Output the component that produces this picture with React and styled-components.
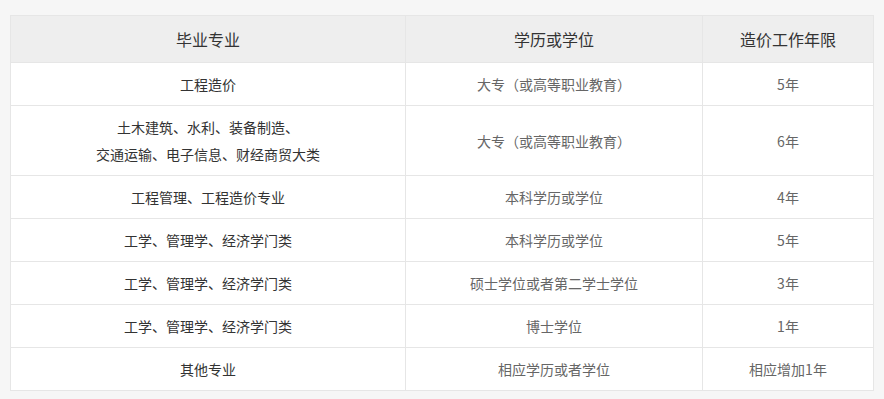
import styled, { createGlobalStyle } from 'styled-components'

const GlobalStyle = createGlobalStyle`
    html, body {
        margin: 0;
        padding: 0;
        background: #f6f6f6;
        font-family: "Noto Sans CJK SC", "Noto Sans", sans-serif;
    }
`

const Page = styled.div`
    padding: 15px 11px 8px 10px;
`

const Table = styled.table`
    width: 863px;
    border-collapse: collapse;
    table-layout: fixed;
    background: #fff;
    border: 1px solid #e6e6e6;
`

const HeadCell = styled.th`
    height: 46px;
    padding: 0 15px;
    background: #eeeeee;
    border: 1px solid #e6e6e6;
    font-size: 16px;
    font-weight: normal;
    color: #333;
    text-align: center;
`

const Cell = styled.td`
    padding: 8px 15px 7px;
    border: 1px solid #e6e6e6;
    font-size: 14px;
    line-height: 27px;
    color: ${props => props.$dark ? '#333' : '#666'};
    text-align: center;
`

const rows = [
    { major: ['工程造价'], degree: '大专（或高等职业教育）', years: '5年' },
    { major: ['土木建筑、水利、装备制造、', '交通运输、电子信息、财经商贸大类'], degree: '大专（或高等职业教育）', years: '6年' },
    { major: ['工程管理、工程造价专业'], degree: '本科学历或学位', years: '4年' },
    { major: ['工学、管理学、经济学门类'], degree: '本科学历或学位', years: '5年' },
    { major: ['工学、管理学、经济学门类'], degree: '硕士学位或者第二学士学位', years: '3年' },
    { major: ['工学、管理学、经济学门类'], degree: '博士学位', years: '1年' },
    { major: ['其他专业'], degree: '相应学历或者学位', years: '相应增加1年' },
]

export default function App() {
    return (
        <>
            <GlobalStyle />
            <Page>
                <Table>
                    <colgroup>
                        <col style={{ width: 395 }} />
                        <col style={{ width: 297 }} />
                        <col style={{ width: 171 }} />
                    </colgroup>
                    <thead>
                        <tr>
                            <HeadCell>毕业专业</HeadCell>
                            <HeadCell>学历或学位</HeadCell>
                            <HeadCell>造价工作年限</HeadCell>
                        </tr>
                    </thead>
                    <tbody>
                        {rows.map((row, i) => (
                            <tr key={i}>
                                <Cell $dark>
                                    {row.major.map((line, j) => (
                                        <div key={j}>{line}</div>
                                    ))}
                                </Cell>
                                <Cell>{row.degree}</Cell>
                                <Cell>{row.years}</Cell>
                            </tr>
                        ))}
                    </tbody>
                </Table>
            </Page>
        </>
    )
}
